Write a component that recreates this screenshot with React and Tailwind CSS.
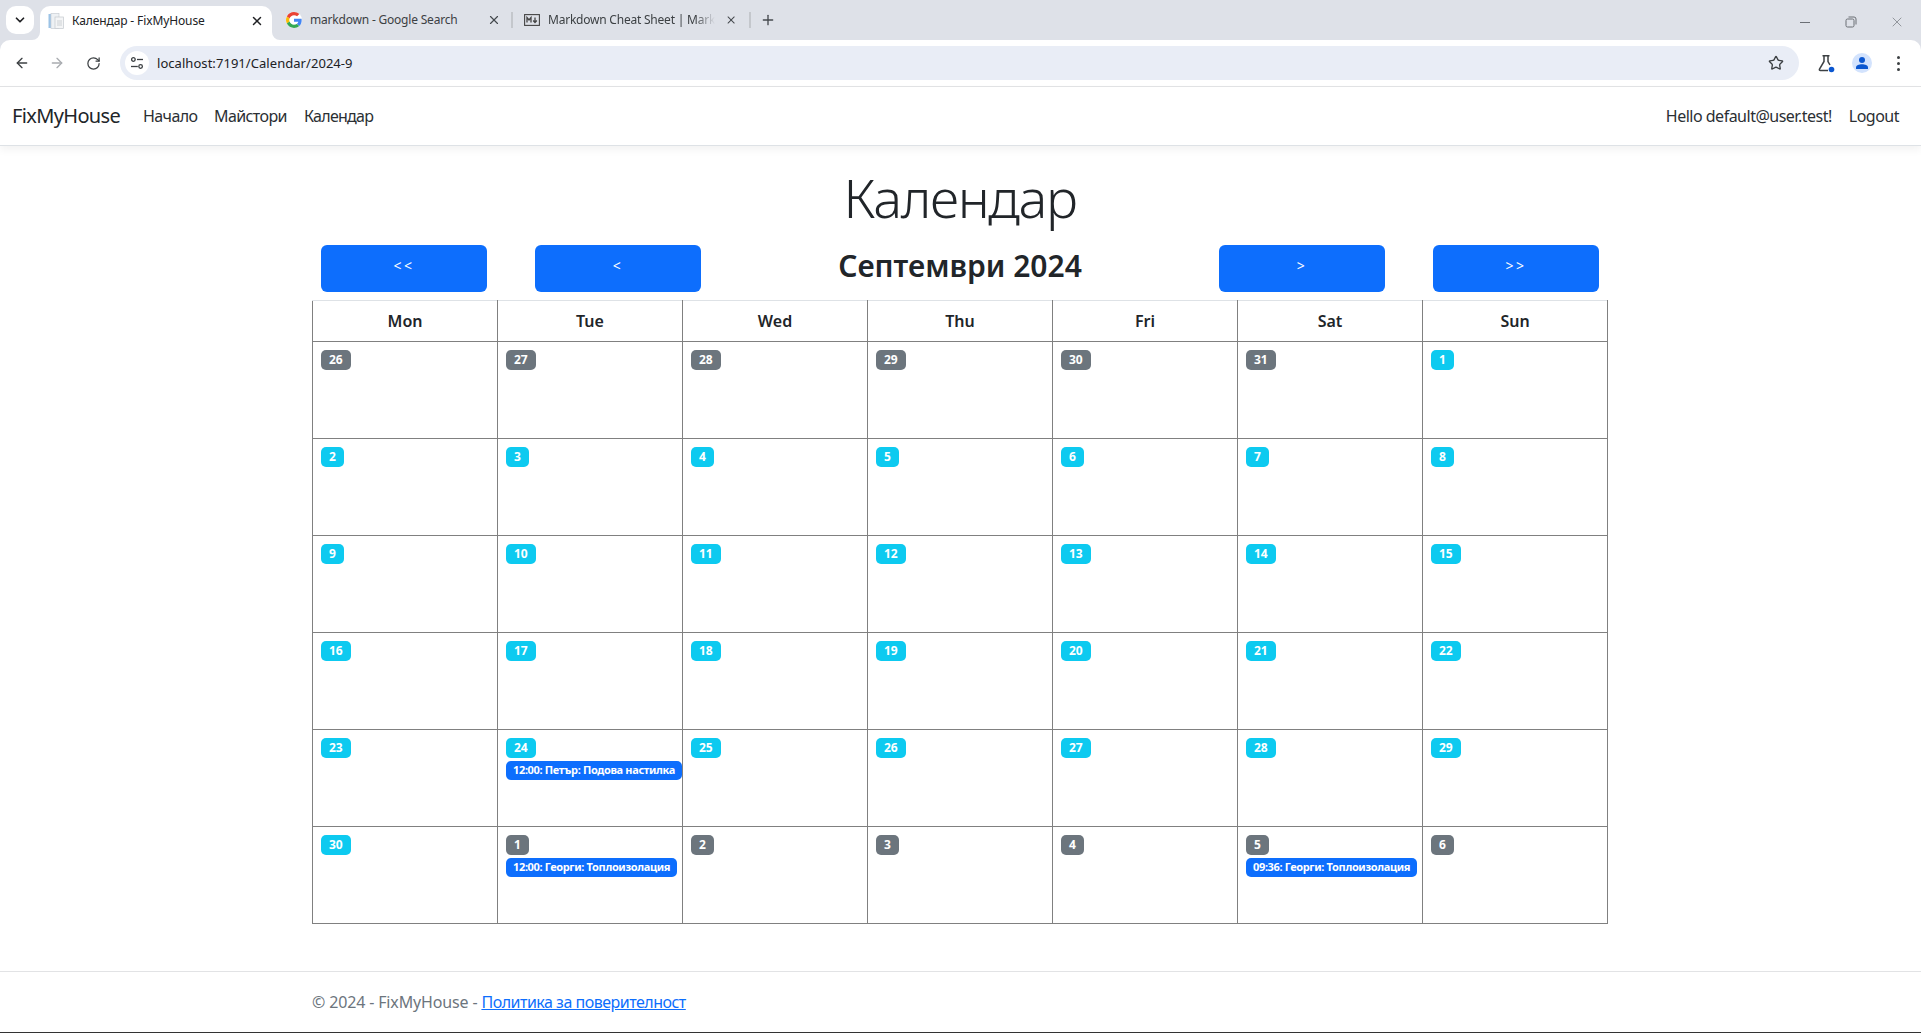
import React from "react";
import { ChevronDown, X, ArrowLeft, ArrowRight, RotateCw, Star, Plus } from "lucide-react";

const weeks = [
  [[26, 0], [27, 0], [28, 0], [29, 0], [30, 0], [31, 0], [1, 1]],
  [[2, 1], [3, 1], [4, 1], [5, 1], [6, 1], [7, 1], [8, 1]],
  [[9, 1], [10, 1], [11, 1], [12, 1], [13, 1], [14, 1], [15, 1]],
  [[16, 1], [17, 1], [18, 1], [19, 1], [20, 1], [21, 1], [22, 1]],
  [[23, 1], [24, 1, "12:00: Петър: Подова настилка"], [25, 1], [26, 1], [27, 1], [28, 1], [29, 1]],
  [[30, 1], [1, 0, "12:00: Георги: Топлоизолация"], [2, 0], [3, 0], [4, 0], [5, 0, "09:36: Георги: Топлоизолация"], [6, 0]],
];
const days = ["Mon", "Tue", "Wed", "Thu", "Fri", "Sat", "Sun"];

function GoogleG() {
  return (
    <svg width="16" height="16" viewBox="0 0 48 48" className="shrink-0">
      <path fill="#EA4335" d="M24 9.5c3.5 0 6.7 1.3 9.2 3.6l6.9-6.9C35.900 2.400 30.400 0 24 0 14.600 0 6.500 5.400 2.600 13.200l8 6.200C12.500 13.700 17.800 9.500 24 9.500z" />
      <path fill="#4285F4" d="M47 24.500c0-1.600-.1-3.100-.4-4.500H24v9h13c-.6 3-2.300 5.500-4.800 7.200l7.700 6C44.400 38 47 31.800 47 24.500z" />
      <path fill="#FBBC05" d="M10.600 28.600c-.5-1.400-.8-3-.8-4.600s.3-3.200.8-4.600l-8-6.200C.9 16.500 0 20.100 0 24s.9 7.500 2.600 10.800l8-6.200z" />
      <path fill="#34A853" d="M24 48c6.500 0 11.900-2.100 15.900-5.800l-7.700-6c-2.200 1.500-4.900 2.300-8.200 2.300-6.200 0-11.500-4.200-13.400-9.900l-8 6.200C6.500 42.600 14.600 48 24 48z" />
    </svg>
  );
}

function PageIcon() {
  return (
    <svg width="16" height="16" viewBox="0 0 16 16" className="shrink-0">
      <rect x="0.500" y="1" width="6" height="14" fill="#9cc3e6" />
      <rect x="3" y="0.500" width="8" height="15" fill="#eef1f4" stroke="#c9ced4" strokeWidth="0.700" />
      <rect x="7" y="4" width="8.500" height="11.500" fill="#f4f5f6" stroke="#c4c8cd" strokeWidth="0.700" />
      <path d="M9 8h5M9 10h5M9 12h5" stroke="#c4c8cd" strokeWidth="0.800" />
    </svg>
  );
}

function MdIcon() {
  return (
    <svg width="16" height="12" viewBox="0 0 16 12" className="shrink-0">
      <rect x="0.600" y="0.600" width="14.800" height="10.800" fill="none" stroke="#444" strokeWidth="1.100" />
      <path d="M3 8.500V3.500l2 2.400 2-2.400v5M11 3.500v4.500M9.200 6.500L11 8.600l1.800-2.100" fill="none" stroke="#444" strokeWidth="1.300" />
    </svg>
  );
}

function TuneIcon() {
  return (
    <svg width="14" height="14" viewBox="0 0 14 14" fill="none" stroke="#3c4043" strokeWidth="1.300">
      <circle cx="3.400" cy="3.500" r="1.800" />
      <path d="M7 3.500h6" />
      <circle cx="10.600" cy="10.500" r="1.800" />
      <path d="M1 10.500h6.800" />
    </svg>
  );
}

function FlaskIcon() {
  return (
    <svg width="20" height="20" viewBox="0 0 20 20" fill="none">
      <path d="M6.500 2.800h7M8 3v5.500L3.500 16c-.4.800 0 1.500.9 1.500H12M12 3v5.500l2 3.500" stroke="#3c4043" strokeWidth="1.500" />
      <circle cx="15.500" cy="16.500" r="2.800" fill="#0b57d0" />
    </svg>
  );
}

function RestoreIcon() {
  return (
    <svg width="12" height="12" viewBox="0 0 12 12" fill="none" stroke="#6b6f75" strokeWidth="1">
      <rect x="1" y="3" width="8" height="8" rx="1.500" />
      <path d="M3.500 1h5.500a2 2 0 0 1 2 2v5.500" />
    </svg>
  );
}

function TabCorner({ side }) {
  return (
    <svg
      width="8"
      height="8"
      viewBox="0 0 8 8"
      className={side === "left" ? "absolute bottom-0 left-[-8px]" : "absolute bottom-0 right-[-8px]"}
    >
      <path d={side === "left" ? "M8 0v8H0a8 8 0 0 0 8-8z" : "M0 0v8h8a8 8 0 0 1-8-8z"} fill="#fff" />
    </svg>
  );
}

function TabStrip() {
  return (
    <div className="flex h-10 shrink-0 items-start bg-[#dee1e8] text-[12px] text-[#3c4043]">
      <div className="ml-[6px] mt-[6px] flex h-7 w-[28px] items-center justify-center rounded-[10px] bg-white">
        <ChevronDown size={14} strokeWidth={3} color="#202124" />
      </div>
      <div className="relative ml-[6px] mt-[6px] flex h-[34px] w-[232px] items-center rounded-t-[10px] bg-white pb-[5px] pl-2 pr-[8px] text-[#202124]">
        <TabCorner side="left" />
        <TabCorner side="right" />
        <PageIcon />
        <span className="ml-2 flex-1 whitespace-nowrap tracking-[-0.12px]">Календар - FixMyHouse</span>
        <X size={14} strokeWidth={2.500} color="#202124" />
      </div>
      <div className="ml-[14px] mt-[12px] flex h-[16px] w-[227px] items-center">
        <div className="flex h-[16px] w-[16px] items-center justify-center rounded-full bg-white">
          <GoogleG />
        </div>
        <span className="ml-2 flex-1 whitespace-nowrap tracking-[-0.2px]">markdown - Google Search</span>
        <X size={14} strokeWidth={2} color="#45494e" className="mr-[10px]" />
        <div className="h-[16px] w-[2px] bg-[#c4c7cc]" />
      </div>
      <div className="ml-[11px] mt-[12px] flex h-[16px] w-[227px] items-center">
        <MdIcon />
        <span className="ml-2 w-[167px] whitespace-nowrap tracking-[-0.22px] [mask-image:linear-gradient(to_right,black_88%,transparent)]">
          Markdown Cheat Sheet | Mark
        </span>
        <X size={14} strokeWidth={2} color="#45494e" className="ml-[10px]" />
        <div className="ml-[12px] h-[16px] w-[2px] bg-[#c4c7cc]" />
      </div>
      <Plus size={16} strokeWidth={2} color="#45494e" className="ml-[9px] mt-3" />
      <div className="ml-auto mt-[14px] flex items-center text-[#6b6f75]">
        <div className="mr-[35px] h-px w-[10px] bg-[#6b6f75]" />
        <RestoreIcon />
        <X size={16} strokeWidth={1} color="#6b6f75" className="ml-[32px] mr-[16px]" />
      </div>
    </div>
  );
}

function Toolbar() {
  return (
    <div className="flex h-[47px] shrink-0 items-start border-b border-[#e2e3e5] bg-[#dee1e8]">
      <div className="flex h-[46px] flex-1 items-center rounded-t-[10px] bg-white">
        <ArrowLeft size={16} strokeWidth={2} color="#3c4043" className="ml-[14px]" />
        <ArrowRight size={16} strokeWidth={2} color="#a9acb0" className="ml-[19px]" />
        <RotateCw size={15} strokeWidth={2} color="#3c4043" className="ml-[21px]" />
        <div className="ml-[19px] flex h-[34px] w-[1679px] items-center rounded-full bg-[#e9edf6] pl-[5px] pr-[15px] text-[13px] text-[#202124]">
          <div className="flex h-[24px] w-[24px] items-center justify-center rounded-full bg-white">
            <TuneIcon />
          </div>
          <span className="ml-[8px] flex-1 pt-px tracking-[0.05px]">localhost:7191/Calendar/2024-9</span>
          <Star size={16} strokeWidth={2} color="#3c4043" />
        </div>
        <div className="ml-[17px]">
          <FlaskIcon />
        </div>
        <div className="ml-[16px] flex h-5 w-5 items-center justify-center rounded-full bg-[#d3e3fd]">
          <svg width="14" height="14" viewBox="0 0 14 14" fill="#0b57d0">
            <circle cx="7" cy="4" r="3" />
            <path d="M1 13v-1.500C1 9.500 4 8.300 7 8.300s6 1.200 6 3.200V13z" />
          </svg>
        </div>
        <div className="ml-[25px] flex flex-col gap-[3px]">
          <div className="h-[3px] w-[3px] rounded-full bg-[#3c4043]" />
          <div className="h-[3px] w-[3px] rounded-full bg-[#3c4043]" />
          <div className="h-[3px] w-[3px] rounded-full bg-[#3c4043]" />
        </div>
      </div>
    </div>
  );
}

function Navbar() {
  return (
    <nav className="relative z-10 flex h-[59px] shrink-0 items-center border-b border-[#dee2e6] bg-white px-3 text-[16px] text-[#2b2f33] shadow-[0_4px_8px_rgba(0,0,0,0.05)]">
      <span className="w-[131px] text-[20px] tracking-[-0.65px] text-[#212529]">FixMyHouse</span>
      <span className="w-[71px] tracking-[-0.6px]">Начало</span>
      <span className="w-[90px] tracking-[-0.6px]">Майстори</span>
      <span className="tracking-[-0.75px]">Календар</span>
      <span className="ml-auto mb-px tracking-[-0.5px]">Hello default@user.test!</span>
      <span className="ml-[17px] mr-[10px] tracking-[-0.5px]">Logout</span>
    </nav>
  );
}

function NavButton({ children }) {
  return (
    <button className="h-[47px] w-[166px] rounded-[6px] bg-[#0d6efd] pb-[6px] text-[14px] tracking-[2.500px] text-white">
      {children}
    </button>
  );
}

function Badge({ n, current }) {
  return (
    <span
      className={
        "block h-[20px] w-fit rounded-[5px] px-[8px] text-center text-[12px] font-bold leading-[20px] text-white " +
        (current ? "bg-[#0dcaf0]" : "bg-[#6c757d]")
      }
    >
      {n}
    </span>
  );
}

function Calendar() {
  return (
    <table className="w-[1296px] table-fixed border-collapse">
      <thead>
        <tr className="h-[41px]">
          {days.map((d) => (
            <th
              key={d}
              className="border border-[#808080] border-t-[#dee2e6] text-center text-[16px] font-semibold text-[#212529]"
            >
              {d}
            </th>
          ))}
        </tr>
      </thead>
      <tbody>
        {weeks.map((w, i) => (
          <tr key={i} className="h-[97px]">
            {w.map(([n, current, ev], j) => (
              <td key={j} className="border border-[#808080] p-0 pl-[8px] pt-[8px] align-top">
                <Badge n={n} current={current} />
                {ev && (
                  <span className="mt-[3px] block h-[19px] w-fit whitespace-nowrap rounded-[5px] bg-[#0d6efd] px-[7px] text-[11px] font-bold leading-[18px] tracking-[-0.35px] text-white">
                    {ev}
                  </span>
                )}
              </td>
            ))}
          </tr>
        ))}
      </tbody>
    </table>
  );
}

export default function App() {
  return (
    <div className="flex h-[1033px] flex-col overflow-hidden bg-white font-['Noto_Sans',sans-serif] text-[#212529]">
      <TabStrip />
      <Toolbar />
      <Navbar />
      <main className="flex-1 pl-[312px]">
        <div className="flex w-[1296px] flex-col items-center">
          <h1 className="mt-[9px] h-[84px] text-[54px] leading-[84px] font-light tracking-[-1.4px] text-[#212529]">
            Календар
          </h1>
          <div className="mt-[6px] flex w-[1278px] items-start gap-[48px]">
            <NavButton>&lt;&lt;</NavButton>
            <NavButton>&lt;</NavButton>
            <h3 className="flex-1 text-center text-[30px] leading-[42px] font-semibold">Септември 2024</h3>
            <NavButton>&gt;</NavButton>
            <NavButton>&gt;&gt;</NavButton>
          </div>
          <div className="mt-[8px]">
            <Calendar />
          </div>
        </div>
      </main>
      <footer className="flex h-[62px] shrink-0 items-center border-t border-b border-t-[#e2e3e5] border-b-[#333] pl-[312px] text-[16px] text-[#6c757d]">
        <span className="tracking-[-0.15px]">© 2024 - FixMyHouse -&nbsp;</span>
        <a className="tracking-[-0.5px] text-[#0d6efd] underline">Политика за поверителност</a>
      </footer>
    </div>
  );
}
